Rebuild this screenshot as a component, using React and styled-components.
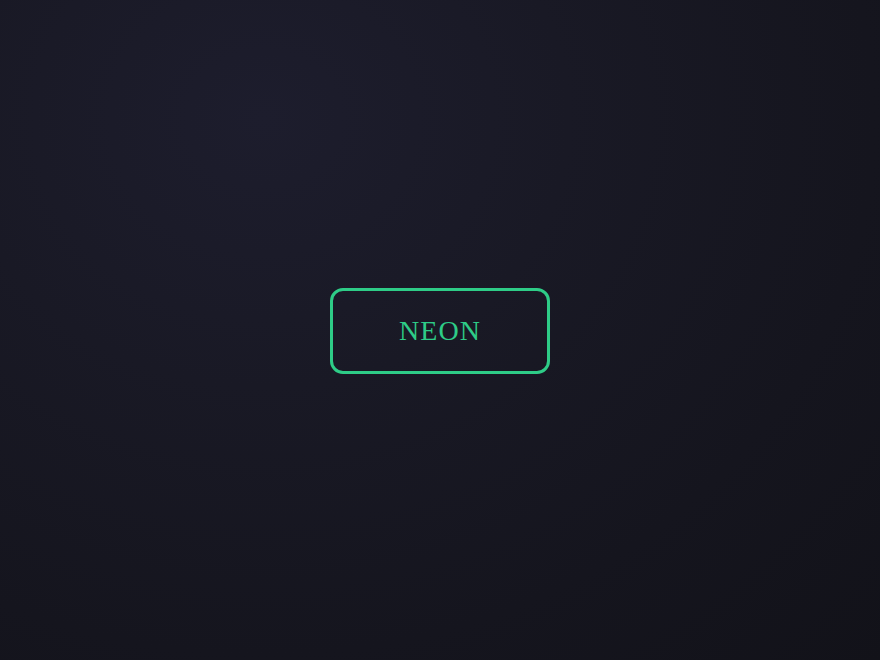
import React from 'react';
import styled, { createGlobalStyle } from 'styled-components';

const GlobalStyle = createGlobalStyle`
  html, body, #root {
    margin: 0;
    height: 100%;
  }

  body {
    background: #13131b;
    font-family: "Liberation Serif", "Times New Roman", serif;
  }
`;

const Stage = styled.div`
  min-height: 100vh;
  display: flex;
  align-items: center;
  justify-content: center;
  background: radial-gradient(
    ellipse at 30% 18%,
    #1d1d2d 0%,
    #191925 35%,
    #15151e 70%,
    #121219 100%
  );
`;

const NeonButton = styled.button`
  width: 220px;
  height: 86px;
  margin-top: 2px;
  background: transparent;
  border: 3px solid #2ecc87;
  border-radius: 13px;
  color: #2ecc87;
  font-family: "Liberation Serif", "Times New Roman", serif;
  font-size: 28px;
  font-weight: 400;
  letter-spacing: 1px;
  cursor: pointer;
  padding: 0;
`;

const App = () => (
  <>
    <GlobalStyle />
    <Stage>
      <NeonButton>NEON</NeonButton>
    </Stage>
  </>
);

export default App;
